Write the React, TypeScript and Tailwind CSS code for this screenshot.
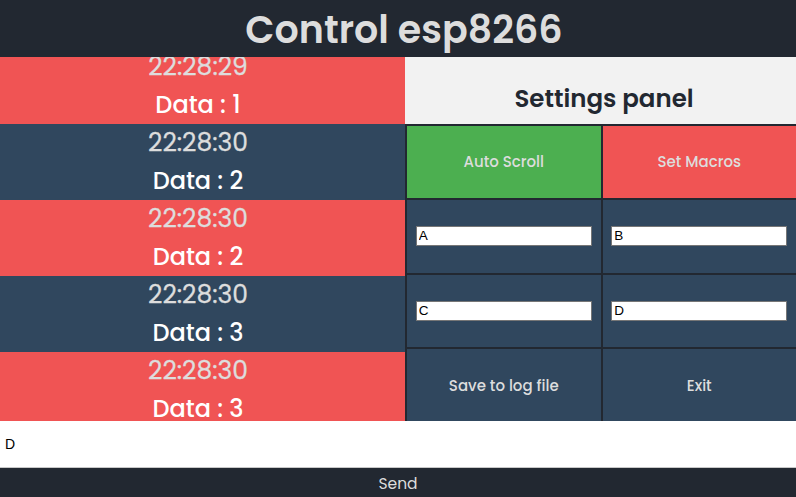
import { useEffect, useRef } from "react";

type LogEntry = {
  time: string;
  value: number;
};

const entries: LogEntry[] = [
  { time: "22:28:29", value: 1 },
  { time: "22:28:30", value: 2 },
  { time: "22:28:30", value: 2 },
  { time: "22:28:30", value: 3 },
  { time: "22:28:30", value: 3 },
];

const font = "font-['Poppins','Inter','Noto_Sans',sans-serif]";

const MacroInput = ({ value }: { value: string }) => (
  <div className="flex items-center justify-center bg-[#30475E]">
    <input
      type="text"
      defaultValue={value}
      className="h-[20px] w-[176px] border border-[#767676] bg-white px-[2px] font-['Liberation_Sans',Arial,sans-serif] text-[13.5px] text-black outline-none"
    />
  </div>
);

export default function App() {
  const logRef = useRef<HTMLDivElement>(null);

  // log is scrolled a bit, like in the running page
  useEffect(() => {
    if (logRef.current) logRef.current.scrollTop = 9;
  }, []);

  return (
    <div className={`flex h-[497px] w-[796px] flex-col overflow-hidden bg-white ${font}`}>
      <header className="flex h-[57px] shrink-0 items-center justify-center bg-[#222831] pl-[12px]">
        <h1 className="pt-[2px] text-[38px] font-semibold leading-none text-[#DDDDDD]">
          Control esp8266
        </h1>
      </header>

      <div className="flex h-[364px] shrink-0">
        <div ref={logRef} className="h-full w-[405px] shrink-0 overflow-hidden">
          {entries.map((e, i) => (
            <div
              key={i}
              className={`flex h-[76px] flex-col items-center pr-[9px] ${
                i % 2 === 0 ? "bg-[#F05454]" : "bg-[#30475E]"
              }`}
            >
              <p className="h-[38px] text-[25px] leading-[38px] text-[#DDDDDD] [-webkit-text-stroke:0.3px_#DDDDDD]">
                {e.time}
              </p>
              <p className="h-[38px] text-[24px] font-medium leading-[38px] text-white">
                Data : {e.value}
              </p>
            </div>
          ))}
        </div>

        <div className="flex flex-1 flex-col">
          <div className="flex h-[67px] shrink-0 items-end justify-center bg-[#F2F2F2] pb-[7px] pl-[7px]">
            <h2 className="text-[24.5px] font-semibold leading-[36px] text-[#222831]">
              Settings panel
            </h2>
          </div>
          <div className="grid flex-1 grid-cols-2 grid-rows-4 gap-[2px] bg-[#222831] pl-[2px] pt-[2px]">
            <button className="bg-[#4CAF50] text-[15px] font-medium text-[#DDDDDD]">
              Auto Scroll
            </button>
            <button className="bg-[#F05454] text-[15px] font-medium text-[#DDDDDD]">
              Set Macros
            </button>
            <MacroInput value="A" />
            <MacroInput value="B" />
            <MacroInput value="C" />
            <MacroInput value="D" />
            <button className="bg-[#30475E] pt-[2px] text-[15px] font-medium text-[#DDDDDD]">
              Save to log file
            </button>
            <button className="bg-[#30475E] pt-[2px] text-[15px] font-medium text-[#DDDDDD]">
              Exit
            </button>
          </div>
        </div>
      </div>

      <input
        type="text"
        defaultValue="D"
        className="h-[47px] w-full shrink-0 border-b border-[#C8C8C8] bg-white px-[5px] font-['Liberation_Sans',Arial,sans-serif] text-[14px] text-black outline-none"
      />
      <button className="flex-1 bg-[#222831] pt-[2px] text-[15.5px] text-[#DDDDDD]">Send</button>
    </div>
  );
}
